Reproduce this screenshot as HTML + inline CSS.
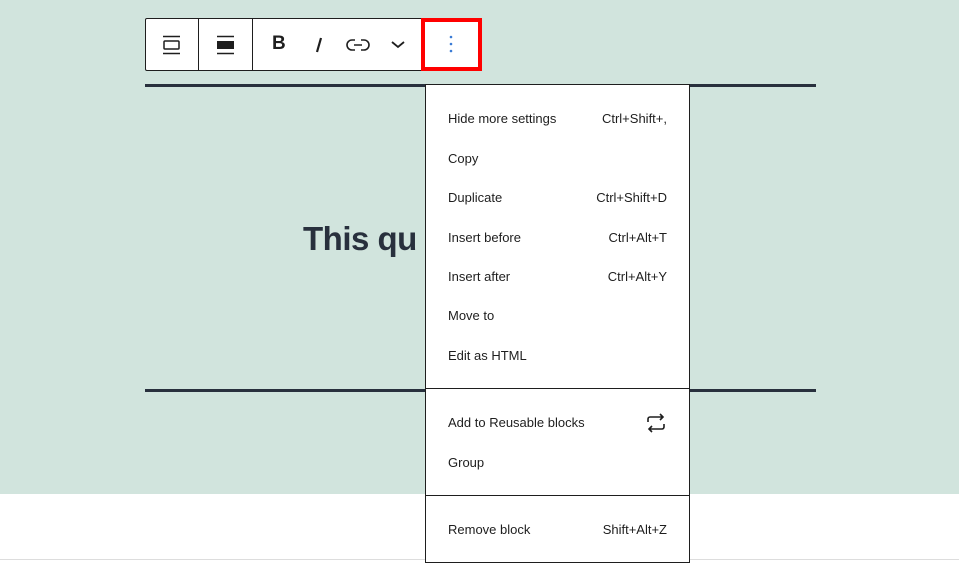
<!DOCTYPE html>
<html><head><style>
*{margin:0;padding:0;box-sizing:border-box}
body{width:959px;height:574px;background:#fff;position:relative;overflow:hidden;font-family:"Liberation Sans",sans-serif}
.green{position:absolute;left:0;top:0;width:959px;height:494px;background:#d1e4dd}
.hl{position:absolute;left:145px;width:671px;height:3px;background:#28303d}
.h1{position:absolute;left:303px;top:220px;font-size:33px;font-weight:bold;color:#28303d;letter-spacing:-0.5px}
.tb{position:absolute;left:145px;top:18px;width:280px;height:53px;background:#fff;border:1px solid #1e1e1e;border-radius:2px}
.sep{position:absolute;top:0;width:1px;height:51px;background:#1e1e1e}
.red{position:absolute;left:421px;top:18px;width:61px;height:53px;border:4px solid #f00;background:#fff}
.menu{position:absolute;left:425px;top:84px;width:265px;height:479px;background:#fff;border:1px solid #1e1e1e}
.it{position:absolute;left:22px;right:22px;font-size:13px;color:#1e1e1e;display:flex;justify-content:space-between}
.ms{position:absolute;left:0;right:0;height:1px;background:#1e1e1e}
svg{position:absolute}
.bl{position:absolute;left:0;top:559px;width:959px;height:1px;background:#ddd}
</style></head><body>
<div class="green"></div>
<div class="hl" style="top:84px"></div>
<div class="hl" style="top:389px"></div>
<div class="h1">This qu</div>
<div class="bl"></div>
<div class="tb">
<div class="sep" style="left:52px"></div><div class="sep" style="left:106px"></div>
<svg style="left:16px;top:16px" width="20" height="20" viewBox="0 0 20 20" fill="none" stroke="#1e1e1e" stroke-width="1.5"><path d="M1 1.5h17M1 18.5h17"/><rect x="2" y="6" width="15" height="8" rx="1"/></svg>
<svg style="left:70px;top:16px" width="20" height="20" viewBox="0 0 20 20"><path d="M1 1.5h17M1 18.5h17" stroke="#1e1e1e" stroke-width="1.5"/><rect x="1" y="6" width="17" height="8" fill="#1e1e1e"/></svg>
<div style="position:absolute;left:126px;top:14px;font-size:19px;font-weight:bold;color:#1e1e1e">B</div>
<svg style="left:166px;top:16px" width="14" height="20" viewBox="0 0 14 20"><path d="M9 3L5 17" stroke="#1e1e1e" stroke-width="2.2"/></svg>
<svg style="left:200px;top:17px" width="24" height="18" viewBox="0 0 24 18" fill="none" stroke="#1e1e1e" stroke-width="1.6"><path d="M9 4H6a5 5 0 0 0 0 10h3M15 4h3a5 5 0 0 1 0 10h-3M8 9h8"/></svg>
<svg style="left:244px;top:20px" width="16" height="12" viewBox="0 0 16 12" fill="none" stroke="#1e1e1e" stroke-width="1.8"><path d="M2 3l6 5 6-5"/></svg>
</div>
<div class="red"></div>
<svg style="left:449px;top:34px" width="4" height="20" viewBox="0 0 4 20" fill="#3a7bd5"><circle cx="2" cy="3" r="1.3"/><circle cx="2" cy="10" r="1.3"/><circle cx="2" cy="17" r="1.3"/></svg>
<div class="menu">
<div class="it" style="top:26px"><span>Hide more settings</span><span>Ctrl+Shift+,</span></div>
<div class="it" style="top:66px"><span>Copy</span></div>
<div class="it" style="top:105px"><span>Duplicate</span><span>Ctrl+Shift+D</span></div>
<div class="it" style="top:145px"><span>Insert before</span><span>Ctrl+Alt+T</span></div>
<div class="it" style="top:184px"><span>Insert after</span><span>Ctrl+Alt+Y</span></div>
<div class="it" style="top:223px"><span>Move to</span></div>
<div class="it" style="top:263px"><span>Edit as HTML</span></div>
<div class="ms" style="top:303px"></div>
<div class="it" style="top:330px"><span>Add to Reusable blocks</span></div>
<svg style="left:219px;top:327px" width="22" height="22" viewBox="0 0 22 22" fill="none" stroke="#1e1e1e" stroke-width="1.6"><path d="M3 10V7a2 2 0 0 1 2-2h13M15 2l3 3-3 3M19 12v3a2 2 0 0 1-2 2H4M7 20l-3-3 3-3"/></svg>
<div class="it" style="top:370px"><span>Group</span></div>
<div class="ms" style="top:410px"></div>
<div class="it" style="top:437px"><span>Remove block</span><span>Shift+Alt+Z</span></div>
</div>
</body></html>
